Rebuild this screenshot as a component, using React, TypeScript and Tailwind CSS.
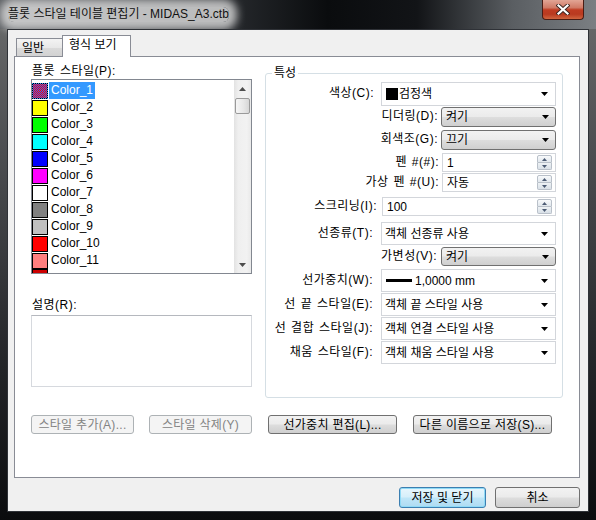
import React from 'react';

const F = "font-['Liberation_Sans','Noto_Sans_CJK_KR',sans-serif]";

function Arrow() {
  return (
    <svg width="7" height="4" viewBox="0 0 7 4" className="shrink-0 ml-auto">
      <polygon points="0,0 7,0 3.5,4" fill="#000" />
    </svg>
  );
}

function ComboWhite({ h, children }: { h: string; children: React.ReactNode }) {
  return (
    <div className={`${h} w-[175px] border border-[#d3d6db] bg-white flex items-center pl-[3px] pr-[7px] whitespace-nowrap`}>
      {children}
      <Arrow />
    </div>
  );
}

function ComboBtn({ h, text }: { h: string; text: string }) {
  return (
    <div className={`${h} w-[115px] rounded-[3px] border border-[#707070] bg-[linear-gradient(180deg,#f2f2f2_0%,#ebebeb_48%,#dddddd_52%,#cfcfcf_100%)] flex items-center pl-[4px] pr-[6px]`}>
      <span>{text}</span>
      <Arrow />
    </div>
  );
}

function Spin({ w, text }: { w: string; text: string }) {
  return (
    <div className={`${w} h-[19px] border border-[#d3d6db] bg-white flex items-center pl-[4px] pr-[3px]`}>
      <span>{text}</span>
      <div className="ml-auto flex flex-col w-[15px] h-[15px]">
        <div className="h-[8px] border border-[#b9c0c9] rounded-t-[2px] bg-[linear-gradient(180deg,#f8fafc,#e1e7ed)] flex items-center justify-center">
          <svg width="5" height="3" viewBox="0 0 5 3"><polygon points="0,3 5,3 2.5,0" fill="#4c5b74" /></svg>
        </div>
        <div className="h-[7px] border border-t-0 border-[#b9c0c9] rounded-b-[2px] bg-[linear-gradient(180deg,#eef2f5,#d9e0e7)] flex items-center justify-center">
          <svg width="5" height="3" viewBox="0 0 5 3"><polygon points="0,0 5,0 2.5,3" fill="#4c5b74" /></svg>
        </div>
      </div>
    </div>
  );
}

function Row({ mt, h, gap, label, children }: { mt: string; h: string; gap: string; label: string; children: React.ReactNode }) {
  return (
    <div className={`flex items-center justify-end ${mt} ${h}`}>
      <span className={`whitespace-nowrap pb-[2px] tracking-[0.5px] [word-spacing:1px] ${gap}`}>{label}</span>
      {children}
    </div>
  );
}

const items = [
  { name: 'Color_1', sw: '', sel: true },
  { name: 'Color_2', sw: 'bg-[#ffff00]', sel: false },
  { name: 'Color_3', sw: 'bg-[#00ff00]', sel: false },
  { name: 'Color_4', sw: 'bg-[#00ffff]', sel: false },
  { name: 'Color_5', sw: 'bg-[#0000ff]', sel: false },
  { name: 'Color_6', sw: 'bg-[#ff00ff]', sel: false },
  { name: 'Color_7', sw: 'bg-[#ffffff]', sel: false },
  { name: 'Color_8', sw: 'bg-[#808080]', sel: false },
  { name: 'Color_9', sw: 'bg-[#c0c0c0]', sel: false },
  { name: 'Color_10', sw: 'bg-[#ff0000]', sel: false },
  { name: 'Color_11', sw: 'bg-[#ff7f7f]', sel: false },
];

const btn = 'h-[19px] rounded-[3px] border border-[#707070] bg-[linear-gradient(180deg,#f2f2f2_0%,#ebebeb_48%,#dddddd_52%,#cfcfcf_100%)] flex items-center justify-center whitespace-nowrap tracking-[0.3px]';
const btnDis = 'h-[19px] rounded-[3px] border border-[#adb2b5] bg-[#f4f4f4] text-[#838383] flex items-center justify-center whitespace-nowrap tracking-[0.3px]';

function Dither() {
  return (
    <svg width="16" height="16" viewBox="0 0 16 16" className="block">
      <defs>
        <pattern id="dith" width="2" height="2" patternUnits="userSpaceOnUse">
          <rect width="2" height="2" fill="#ff0000" />
          <rect width="1" height="1" fill="#3366ff" />
          <rect x="1" y="1" width="1" height="1" fill="#3366ff" />
        </pattern>
        <pattern id="dithb" width="2" height="2" patternUnits="userSpaceOnUse">
          <rect width="2" height="2" fill="#000000" />
          <rect width="1" height="1" fill="#3399ff" />
          <rect x="1" y="1" width="1" height="1" fill="#3399ff" />
        </pattern>
      </defs>
      <rect width="16" height="16" fill="url(#dithb)" />
      <rect x="1" y="1" width="14" height="14" fill="url(#dith)" />
    </svg>
  );
}

export default function App() {
  return (
    <div className={`${F} w-[596px] h-[520px] overflow-hidden flex flex-col text-[12px] leading-[14px] text-black bg-[linear-gradient(180deg,#6b6c6c_0%,#4b4d50_30%,#232528_70%,#0b0c0e_100%)]`}>
      {/* title bar */}
      <div className="h-[29px] shrink-0 flex items-start bg-[linear-gradient(90deg,#5d6064_0%,#2c2f33_35%,#0a0c0e_55%,#121417_70%,#5a5e62_86%,#7b7f83_100%)]">
        <div className="ml-[8px] mt-[7px] leading-[15px] text-[12px] rounded-[6px] bg-[rgba(220,220,220,0.82)] shadow-[0_0_9px_8px_rgba(220,220,220,0.82)] whitespace-nowrap text-[#111]">
          플롯 스타일 테이블 편집기 - MIDAS_A3.ctb
        </div>
        <div className="ml-auto mr-[12px] w-[42px] h-[20px] border border-t-0 border-[#4a1c14] rounded-b-[4px] bg-[linear-gradient(180deg,#e2a595_0%,#d07a66_40%,#bf3c22_52%,#b93a20_75%,#d0653f_100%)] flex items-center justify-center">
          <svg width="14" height="11" viewBox="0 0 14 11">
            <path d="M2.5 1.5 L11.5 9.5 M11.5 1.5 L2.5 9.5" stroke="#3b2520" strokeWidth="4" strokeLinecap="square" />
            <path d="M2.5 1.5 L11.5 9.5 M11.5 1.5 L2.5 9.5" stroke="#ffffff" strokeWidth="2.2" strokeLinecap="square" />
          </svg>
        </div>
      </div>

      {/* client */}
      <div className="flex-1 flex px-[7px] pb-[8px]">
        <div className="flex-1 border border-[#2f3237] bg-[#f0f0f0] pl-[6px] pt-[5px] flex flex-col">
          {/* tabs */}
          <div className="relative z-10 flex items-end h-[21px] pl-[2px]">
            <div className="w-[46px] h-[18px] border border-r-0 border-b-0 border-[#898c95] bg-[linear-gradient(180deg,#f3f3f3_0%,#e8e8e8_50%,#dadada_52%,#d2d2d2_100%)] pl-[5px] flex items-center">
              일반
            </div>
            <div className="w-[69px] h-[22px] -mb-[1px] border border-b-0 border-[#898c95] bg-white pl-[6px] pt-[2px]">
              형식 보기
            </div>
          </div>

          {/* panel */}
          <div className="w-[566px] h-[422px] border border-[#898c95] bg-white flex flex-col">
            <div className="flex">
              {/* left column */}
              <div className="ml-[16px] w-[221px] flex flex-col">
                <div className="mt-[7px] pl-[1px] whitespace-nowrap tracking-[0.5px] [word-spacing:1px]">플롯 스타일(P):</div>
                <div className="mt-[1px] h-[195px] border border-[#828790] flex overflow-hidden">
                  <div className="flex-1 pt-[2px] overflow-hidden">
                    {items.map((it) => (
                      <div key={it.name} className="h-[17px] flex items-center">
                        {it.sel ? (
                          <Dither />
                        ) : (
                          <div className={`w-[16px] h-[16px] border border-black ${it.sw}`} />
                        )}
                        <span className={`ml-[1px] px-[2px] h-[17px] leading-[17px] ${it.sel ? 'bg-[#3399ff] text-white' : ''}`}>{it.name}</span>
                      </div>
                    ))}
                    <div className="h-[17px] flex items-start">
                      <div className="w-[16px] h-[16px] border border-black bg-[#cc0000]" />
                    </div>
                  </div>
                  <div className="w-[17px] flex flex-col bg-[linear-gradient(90deg,#e2e2e2_0%,#efefef_25%,#f2f2f2_75%,#e9e9e9_100%)]">
                    <div className="h-[17px] flex items-center justify-center">
                      <svg width="7" height="4" viewBox="0 0 7 4"><polygon points="0,4 7,4 3.5,0" fill="#4d4d4d" /></svg>
                    </div>
                    <div className="mt-[1px] ml-[1px] w-[15px] h-[16px] rounded-[2px] border border-[#9a9a9a] bg-[linear-gradient(90deg,#f6f6f6,#e6e6e6_60%,#d6d6d6)]" />
                    <div className="mt-auto h-[17px] flex items-center justify-center">
                      <svg width="7" height="4" viewBox="0 0 7 4"><polygon points="0,0 7,0 3.5,4" fill="#4d4d4d" /></svg>
                    </div>
                  </div>
                </div>
                <div className="mt-[24px] pl-[1px] tracking-[0.5px]">설명(R):</div>
                <div className="mt-[3px] h-[72px] border border-[#d6d9de] border-t-[#b5b8be] bg-white" />
              </div>

              {/* properties group */}
              <fieldset className="ml-[13px] mt-[9px] w-[298px] h-[332px] min-w-0 border border-[#d5dfe5] rounded-[3px] pr-[6px]">
                <legend className="ml-[6px] px-[2px] leading-[14px]">특성</legend>
                <Row mt="mt-[2px]" h="h-[24px]" gap="mr-[7px]" label="색상(C):">
                  <ComboWhite h="h-[24px]">
                    <span className="w-[12px] h-[12px] bg-black mr-[1px] ml-[1px]" />
                    <span>검정색</span>
                  </ComboWhite>
                </Row>
                <Row mt="mt-[1px]" h="h-[20px]" gap="mr-[3px]" label="디더링(D):">
                  <ComboBtn h="h-[20px]" text="켜기" />
                </Row>
                <Row mt="mt-[3px]" h="h-[20px]" gap="mr-[3px]" label="회색조(G):">
                  <ComboBtn h="h-[20px]" text="끄기" />
                </Row>
                <Row mt="mt-[3px]" h="h-[19px]" gap="mr-[3px]" label="펜 #(#):">
                  <Spin w="w-[114px]" text="1" />
                </Row>
                <Row mt="mt-[1px]" h="h-[19px]" gap="mr-[3px]" label="가상 펜 #(U):">
                  <Spin w="w-[114px]" text="자동" />
                </Row>
                <Row mt="mt-[5px]" h="h-[19px]" gap="mr-[5px]" label="스크리닝(I):">
                  <Spin w="w-[174px]" text="100" />
                </Row>
                <Row mt="mt-[6px]" h="h-[23px]" gap="mr-[8px]" label="선종류(T):">
                  <ComboWhite h="h-[23px]"><span>객체 선종류 사용</span></ComboWhite>
                </Row>
                <Row mt="mt-[2px]" h="h-[19px]" gap="mr-[4px]" label="가변성(V):">
                  <ComboBtn h="h-[19px]" text="켜기" />
                </Row>
                <Row mt="mt-[3px]" h="h-[23px]" gap="mr-[8px]" label="선가중치(W):">
                  <ComboWhite h="h-[23px]">
                    <span className="w-[26px] h-[3px] bg-black ml-[1px] mr-[3px]" />
                    <span>1,0000 mm</span>
                  </ComboWhite>
                </Row>
                <Row mt="mt-[1px]" h="h-[23px]" gap="mr-[8px]" label="선 끝 스타일(E):">
                  <ComboWhite h="h-[23px]"><span>객체 끝 스타일 사용</span></ComboWhite>
                </Row>
                <Row mt="mt-[1px]" h="h-[23px]" gap="mr-[8px]" label="선 결합 스타일(J):">
                  <ComboWhite h="h-[23px]"><span>객체 연결 스타일 사용</span></ComboWhite>
                </Row>
                <Row mt="mt-[1px]" h="h-[23px]" gap="mr-[8px]" label="채움 스타일(F):">
                  <ComboWhite h="h-[23px]"><span>객체 채움 스타일 사용</span></ComboWhite>
                </Row>
              </fieldset>
            </div>

            {/* panel buttons */}
            <div className="flex mt-[17px] ml-[16px]">
              <div className={`${btnDis} w-[103px]`}>스타일 추가(A)...</div>
              <div className={`${btnDis} w-[103px] ml-[15px]`}>스타일 삭제(Y)</div>
              <div className={`${btn} w-[129px] ml-[16px]`}>선가중치 편집(L)...</div>
              <div className={`${btn} w-[139px] ml-[16px]`}>다른 이름으로 저장(S)...</div>
            </div>
          </div>

          {/* dialog buttons */}
          <div className="w-[566px] flex justify-end mt-[9px]">
            <div className="w-[87px] h-[21px] rounded-[3px] border border-[#3c7fb1] shadow-[inset_0_0_0_1px_#8fdaf6] bg-[linear-gradient(180deg,#e8f6fd_0%,#d6effa_48%,#bfe6f8_52%,#aedbf2_100%)] flex items-center justify-center">
              저장 및 닫기
            </div>
            <div className="w-[85px] h-[21px] ml-[9px] rounded-[3px] border border-[#707070] bg-[linear-gradient(180deg,#f2f2f2_0%,#ebebeb_48%,#dddddd_52%,#cfcfcf_100%)] flex items-center justify-center">
              취소
            </div>
          </div>
        </div>
      </div>
    </div>
  );
}
